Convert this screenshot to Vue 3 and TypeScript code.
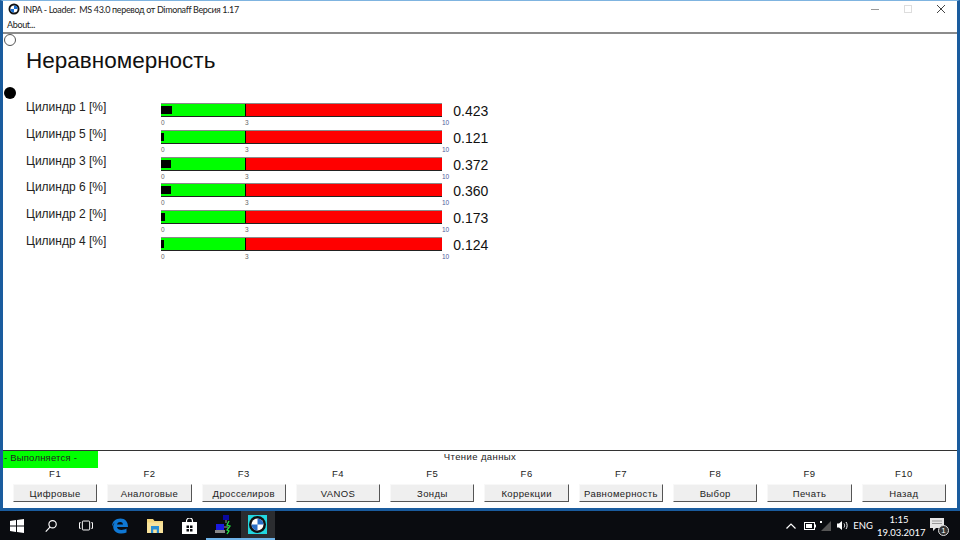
<script setup lang="ts">
const rows = [
  { name: 'Цилиндр 1 [%]', value: 0.423 },
  { name: 'Цилиндр 5 [%]', value: 0.121 },
  { name: 'Цилиндр 3 [%]', value: 0.372 },
  { name: 'Цилиндр 6 [%]', value: 0.36 },
  { name: 'Цилиндр 2 [%]', value: 0.173 },
  { name: 'Цилиндр 4 [%]', value: 0.124 },
]

const keys = [
  { key: 'F1', label: 'Цифровые' },
  { key: 'F2', label: 'Аналоговые' },
  { key: 'F3', label: 'Дросселиров' },
  { key: 'F4', label: 'VANOS' },
  { key: 'F5', label: 'Зонды' },
  { key: 'F6', label: 'Коррекции' },
  { key: 'F7', label: 'Равномерность' },
  { key: 'F8', label: 'Выбор' },
  { key: 'F9', label: 'Печать' },
  { key: 'F10', label: 'Назад' },
]

// 84px of bar stands for 3 percent
function markWidth(v: number) {
  return Math.max(3, Math.floor((v * 84) / 3)) + 'px'
}
</script>

<template>
  <div class="screen">
    <div class="window">
      <div class="titlebar">
        <svg class="appicon" width="12" height="12" viewBox="0 0 12 12">
          <circle cx="6" cy="6" r="5.5" fill="#111" />
          <circle cx="6" cy="6" r="3.6" fill="#fff" />
          <path d="M6 2.4A3.6 3.6 0 0 1 9.6 6H6zM6 9.6A3.6 3.6 0 0 1 2.4 6H6z" fill="#1c6fd0" />
        </svg>
        <span class="title">INPA - Loader:&nbsp; MS 43.0 перевод от Dimonaff Версия 1.17</span>
        <div class="winbtns">
          <svg width="10" height="10" viewBox="0 0 10 10"><path d="M1 5.5h8" stroke="#999" fill="none" /></svg>
          <svg width="10" height="10" viewBox="0 0 10 10"><rect x="1.5" y="1.5" width="7" height="7" stroke="#ddd" fill="none" /></svg>
          <svg width="10" height="10" viewBox="0 0 10 10"><path d="M1 1l8 8M9 1l-8 8" stroke="#444" fill="none" /></svg>
        </div>
      </div>
      <div class="menubar">About...</div>

      <div class="content">
        <span class="dot dot-open"></span>
        <span class="dot dot-full"></span>
        <h1>Неравномерность</h1>
        <div class="rows">
          <div v-for="r in rows" :key="r.name" class="row">
            <div class="name">{{ r.name }}</div>
            <div class="gauge">
              <div class="bar">
                <div class="green"><div class="mark" :style="{ width: markWidth(r.value) }"></div></div>
                <div class="red"></div>
              </div>
              <div class="scale">
                <span class="s1">0</span>
                <span class="s2">3</span>
                <span class="s3">10</span>
              </div>
            </div>
            <div class="value">{{ r.value.toFixed(3) }}</div>
          </div>
        </div>
      </div>

      <div class="footer">
        <div class="status">
          <div class="running">- Выполняется -</div>
          <div class="reading">Чтение данных</div>
        </div>
        <div class="keys">
          <div v-for="k in keys" :key="k.key" class="keycol">
            <div class="fkey">{{ k.key }}</div>
            <button class="btn">{{ k.label }}</button>
          </div>
        </div>
      </div>
    </div>

    <div class="taskbar">
      <div class="task">
        <svg width="16" height="16" viewBox="0 0 16 16" fill="#fff">
          <path d="M1 3l6-.9V7.5H1zM8 2l7-1v6.5H8zM1 8.5h6v5.4l-6-.9zM8 8.5h7V15l-7-1z" />
        </svg>
      </div>
      <div class="task search">
        <svg width="14" height="14" viewBox="0 0 16 16" fill="none" stroke="#fff" stroke-width="1.3">
          <circle cx="9.8" cy="6" r="4.2" />
          <path d="M6.8 9.2L2 14.4" />
        </svg>
      </div>
      <div class="task">
        <svg width="16" height="13" viewBox="0 0 18 16" fill="none" stroke="#fff" stroke-width="1.2">
          <rect x="4.5" y="2.5" width="9" height="11" rx="1" />
          <path d="M2.5 4.5h-1.5v7h1.5M15.5 4.5h1.5v7h-1.5" />
        </svg>
      </div>
      <div class="task">
        <svg width="18" height="18" viewBox="0 0 18 18">
          <path d="M1 9.500C1 4.500 4.500 1.500 9.500 1.500c4.700 0 7.500 3 7.500 8.500H6c.2 3 5.500 4 9.500 1.500v4c-5 2.300-13 1-13.300-5.500C2.100 8 3 6.500 4 5.500 2.500 6.500 1.500 8 1 9.500zM6 7.500h6c0-3.300-5.500-3.300-6 0z" fill="#0f78d4" />
        </svg>
      </div>
      <div class="task">
        <svg width="16" height="15" viewBox="0 0 16 15">
          <path d="M0 1h6l1.500 2H16v12H0z" fill="#f3d67e" />
          <path d="M0 4.500h16V15H0z" fill="#f8e29b" />
          <path d="M4 8h8v7h-2.200v-3.500H6.200V15H4z" fill="#2a8fd6" />
        </svg>
      </div>
      <div class="task">
        <svg width="15" height="16" viewBox="0 0 15 16">
          <path d="M4.500 4V3a3 3 0 0 1 6 0v1" fill="none" stroke="#fff" stroke-width="1.2" />
          <path d="M0 4h15v12H0z" fill="#fff" />
          <path d="M4.500 7.500h2.500v2.500H4.500zM8 7.500h2.500v2.500H8zM4.500 11h2.500v2.500H4.500zM8 11h2.500v2.500H8z" fill="#0a0c10" />
        </svg>
      </div>
      <div class="task open">
        <svg width="18" height="20" viewBox="0 0 18 20">
          <rect x="8" y="0" width="6" height="5" fill="#0a0aa0" />
          <rect x="1" y="9" width="8" height="6" fill="#1a1ae0" />
          <path d="M0 15h10v3H0z" fill="#888" />
          <path d="M11 5v3M9 12h4" stroke="#999" fill="none" />
          <path d="M14 6l-2 4 3 1-3 4 2 1-2 3" stroke="#22e040" stroke-width="1.300" fill="none" />
        </svg>
      </div>
      <div class="task open active">
        <svg width="19" height="19" viewBox="0 0 19 19">
          <rect width="19" height="19" fill="#22d8e0" />
          <circle cx="9.500" cy="9.500" r="8.500" fill="#111" />
          <circle cx="9.500" cy="9.500" r="6" fill="#fff" />
          <path d="M9.500 3.500a6 6 0 0 1 6 6h-6zM9.500 15.500a6 6 0 0 1-6-6h6z" fill="#2a6fc8" />
        </svg>
      </div>

      <div class="tray">
        <svg width="10" height="6" viewBox="0 0 10 6" fill="none" stroke="#fff" stroke-width="1.200"><path d="M.5 5.500L5 1l4.500 4.500" /></svg>
        <svg class="t-batt" width="12" height="8" viewBox="0 0 12 8"><rect x=".5" y=".5" width="10" height="7" fill="none" stroke="#fff" /><rect x="2" y="2" width="6" height="4" fill="#fff" /><rect x="11" y="2.500" width="1" height="3" fill="#fff" /></svg>
        <svg class="t-wifi" width="13" height="12" viewBox="0 0 13 12"><path d="M12 1v10H2z" fill="#555" /><rect x="1" y="1" width="2" height="2" fill="#fff" /></svg>
        <svg class="t-vol" width="13" height="11" viewBox="0 0 13 11" fill="none" stroke="#fff"><path d="M1 3.500h2L6 1v9L3 7.500H1z" fill="#fff" stroke="none" /><path d="M8 3.500c.8 1 .8 3 0 4M10 2c1.500 2 1.500 5 0 7" /></svg>
        <span class="lang">ENG</span>
        <div class="clock">
          <div>1:15</div>
          <div>19.03.2017</div>
        </div>
        <div class="notify">
          <svg width="14" height="14" viewBox="0 0 14 14"><path d="M0 0h14v10H6l-3 3v-3H0z" fill="#e6e6e6" /><path d="M2 3h10M2 5.500h10" stroke="#999" /></svg>
          <span class="badge">1</span>
        </div>
      </div>
    </div>
  </div>
</template>

<style>
html, body {
  margin: 0;
  background: #0a0c10;
}
</style>

<style scoped>
.screen {
  width: 960px;
  height: 540px;
  display: flex;
  flex-direction: column;
  overflow: hidden;
  font-family: "Liberation Sans", Arial, sans-serif;
}

.window {
  height: 511px;
  box-sizing: border-box;
  border: 3px solid #1a5c9e;
  border-top: 1px solid #7fb4e0;
  background: #fff;
  display: flex;
  flex-direction: column;
}

.titlebar {
  height: 16px;
  display: flex;
  align-items: center;
  padding-left: 5px;
  flex: none;
}
.appicon {
  margin-right: 3px;
}
.title {
  font-family: Lato, sans-serif;
  font-size: 9px;
  letter-spacing: -.35px;
  color: #222;
}
.winbtns {
  margin-left: auto;
  display: flex;
  gap: 23px;
  padding-right: 11px;
}

.menubar {
  height: 15px;
  line-height: 15px;
  padding-left: 4px;
  font-family: Lato, sans-serif;
  font-size: 9px;
  letter-spacing: -.35px;
  color: #222;
  border-bottom: 2px solid #8c8c8c;
  flex: none;
}

.content {
  position: relative;
  flex: 1;
  padding: 13px 0 0 23px;
}
.dot {
  position: absolute;
  left: 1px;
  width: 12px;
  height: 12px;
  border-radius: 50%;
  box-sizing: border-box;
}
.dot-open {
  top: 0;
  border: 1px solid #555;
}
.dot-full {
  top: 53px;
  background: #000;
}

h1 {
  margin: 0;
  font-weight: 400;
  font-size: 22.500px;
  line-height: 28px;
  color: #111;
}

.rows {
  margin-top: 28px;
  display: flex;
  flex-direction: column;
  gap: 3.800px;
}
.row {
  display: flex;
  height: 23px;
}
.name {
  width: 135px;
  font-size: 12px;
  line-height: 15px;
  margin-top: -3px;
  color: #222;
}
.bar {
  width: 281px;
  height: 14px;
  box-sizing: border-box;
  display: flex;
  border-top: 1px solid #8a8a8a;
  border-bottom: 1px solid #222;
}
.green {
  width: 84px;
  background: #00ff00;
  border-right: 1px solid #000;
  box-sizing: content-box;
  padding-top: 2px;
  display: flex;
  align-items: flex-start;
}
.mark {
  height: 8px;
  background: #000;
}
.red {
  flex: 1;
  background: #ff0000;
}
.scale {
  display: flex;
  margin-top: 2px;
  font-size: 6.500px;
  line-height: 8px;
  color: #666;
}
.s1 { width: 84px; }
.s2 { width: 197px; }
.s3 { color: #4a5a9a; }
.value {
  margin-left: 4px;
  margin-top: 1px;
  width: 50px;
  font-size: 14px;
  line-height: 15px;
  color: #111;
}

.footer {
  flex: none;
  height: 57px;
  border-top: 1px solid #333;
}
.status {
  position: relative;
  height: 17px;
  display: flex;
  justify-content: center;
}
.running {
  position: absolute;
  left: 0;
  top: 0;
  width: 94px;
  padding-left: 1px;
  height: 17px;
  background: #00ff00;
  font-size: 9.500px;
  line-height: 14px;
  letter-spacing: .2px;
  color: #222;
}
.reading {
  font-size: 9.500px;
  line-height: 12px;
  letter-spacing: .4px;
  color: #222;
}
.keys {
  display: flex;
  padding-left: 10px;
  gap: 10px;
}
.keycol {
  width: 84.300px;
  display: flex;
  flex-direction: column;
  align-items: center;
}
.fkey {
  font-size: 9.500px;
  line-height: 12px;
  letter-spacing: .5px;
  color: #222;
  margin-bottom: 4px;
}
.btn {
  width: 100%;
  height: 18px;
  padding: 0;
  background: #efefef;
  border: 1px solid;
  border-color: #f8f8f8 #555 #555 #f8f8f8;
  font-family: "Liberation Sans", Arial, sans-serif;
  font-size: 9.500px;
  letter-spacing: .4px;
  color: #222;
}

.taskbar {
  flex: 1;
  background: #0a0c10;
  display: flex;
  align-items: stretch;
  color: #fff;
}
.task {
  width: 34.400px;
  flex: none;
  display: flex;
  align-items: center;
  justify-content: center;
  box-sizing: border-box;
}
.search {
  padding-right: 2px;
}
.open {
  border-bottom: 2px solid #6fb4e8;
}
.active {
  background: #2b2d30;
}
.tray {
  margin-left: auto;
  display: flex;
  align-items: center;
  padding-right: 14px;
}
.t-batt { margin-left: 8px; }
.t-wifi { margin-left: 3px; }
.t-vol { margin-left: 4px; }
.lang {
  margin-left: 4px;
  font-family: Lato, sans-serif;
  font-size: 9.500px;
}
.clock {
  margin-left: 4px;
  width: 44px;
  text-align: center;
  font-family: Lato, sans-serif;
  font-size: 9.500px;
  line-height: 13px;
}
.notify {
  position: relative;
  margin-left: 9px;
  width: 16px;
  height: 16px;
}
.badge {
  position: absolute;
  right: -3px;
  bottom: -2px;
  width: 11px;
  height: 11px;
  border-radius: 50%;
  background: #333;
  border: 1px solid #ddd;
  box-sizing: border-box;
  font-size: 8px;
  line-height: 9px;
  text-align: center;
}
</style>
